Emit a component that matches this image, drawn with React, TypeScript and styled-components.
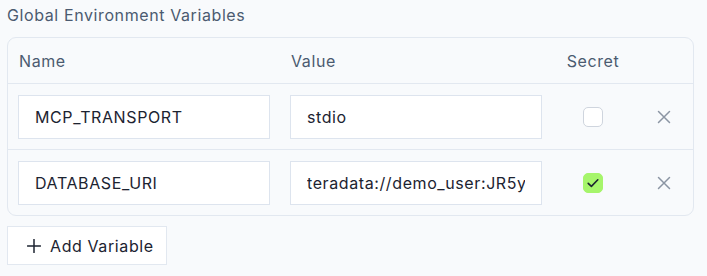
import styled, { createGlobalStyle } from 'styled-components';

const GlobalStyle = createGlobalStyle`
  html, body {
    margin: 0;
    padding: 0;
    background: #f8fafc;
  }
  body {
    font-family: Inter, "Noto Sans", sans-serif;
    letter-spacing: 0.6px;
  }
`;

type Variable = { name: string; value: string; secret: boolean };

const variables: Variable[] = [
  { name: 'MCP_TRANSPORT', value: 'stdio', secret: false },
  { name: 'DATABASE_URI', value: 'teradata://demo_user:JR5yPx9@host:1025/db', secret: true },
];

function CloseIcon() {
  return (
    <svg width="14" height="14" viewBox="0 0 14 14" fill="none">
      <path d="M1.5 1.5L12.5 12.5M12.5 1.5L1.5 12.5" stroke="#8b95a3" strokeWidth="1.5" strokeLinecap="round" />
    </svg>
  );
}

function CheckIcon() {
  return (
    <svg width="14" height="14" viewBox="0 0 14 14" fill="none">
      <path d="M2.2 7.4L5.4 10.4L11.8 3.8" stroke="#1c2331" strokeWidth="1.6" strokeLinecap="round" strokeLinejoin="round" />
    </svg>
  );
}

function PlusIcon() {
  return (
    <svg width="14" height="14" viewBox="0 0 14 14" fill="none">
      <path d="M7 0.5V13.5M0.5 7H13.5" stroke="#1c2331" strokeWidth="1.5" strokeLinecap="round" />
    </svg>
  );
}

function App(): JSX.Element {
  return (
    <Page>
      <GlobalStyle />
      <Title>Global Environment Variables</Title>
      <Card>
        <HeaderRow>
          <HeadCell>Name</HeadCell>
          <HeadCell>Value</HeadCell>
          <HeadCell $center>Secret</HeadCell>
          <span />
        </HeaderRow>
        {variables.map((v, i) => (
          <Row key={v.name} $last={i === variables.length - 1}>
            <Field defaultValue={v.name} />
            <Field defaultValue={v.value} />
            <CheckCell>
              <Checkbox $checked={v.secret}>{v.secret && <CheckIcon />}</Checkbox>
            </CheckCell>
            <RemoveButton aria-label="Remove">
              <CloseIcon />
            </RemoveButton>
          </Row>
        ))}
      </Card>
      <AddButton>
        <PlusIcon />
        <span>Add Variable</span>
      </AddButton>
    </Page>
  );
}

export default App;

const Page = styled.div`
  width: 707px;
  height: 276px;
  box-sizing: border-box;
  padding: 4px 13px 0 7px;
  display: flex;
  flex-direction: column;
  align-items: flex-start;
`;

const Title = styled.div`
  font-size: 16px;
  line-height: 22px;
  color: #4b5b70;
  margin-bottom: 11px;
`;

const Card = styled.div`
  width: 100%;
  box-sizing: border-box;
  border: 1px solid #e2e8f0;
  border-radius: 9px;
  background: #f8fafc;
`;

const Grid = styled.div`
  display: grid;
  grid-template-columns: 252px 252px 62px 39px;
  column-gap: 20px;
  align-items: center;
  padding: 0 10px;
`;

const HeaderRow = styled(Grid)`
  height: 45px;
  border-bottom: 1px solid #e2e8f0;
`;

const HeadCell = styled.div<{ $center?: boolean }>`
  font-size: 16px;
  color: #4b5b70;
  padding-left: ${({ $center }) => ($center ? '0' : '1px')};
  text-align: ${({ $center }) => ($center ? 'center' : 'left')};
`;

const Row = styled(Grid)<{ $last: boolean }>`
  height: 65px;
  border-bottom: ${({ $last }) => ($last ? 'none' : '1px solid #e2e8f0')};
`;

const Field = styled.input`
  box-sizing: border-box;
  width: 100%;
  height: 44px;
  padding: 0 16px;
  border: 1px solid #dde4ee;
  border-radius: 0;
  background: #ffffff;
  font-family: Inter, "Noto Sans", sans-serif;
  font-size: 16px;
  letter-spacing: 0.6px;
  color: #1c2331;
  outline: none;
`;

const CheckCell = styled.div`
  display: flex;
  justify-content: center;
`;

const Checkbox = styled.div<{ $checked: boolean }>`
  width: 20px;
  height: 20px;
  box-sizing: border-box;
  border-radius: 5px;
  border: 1px solid ${({ $checked }) => ($checked ? '#a6f56b' : '#cfd5de')};
  background: ${({ $checked }) => ($checked ? '#a6f56b' : '#ffffff')};
  display: flex;
  align-items: center;
  justify-content: center;
`;

const RemoveButton = styled.button`
  border: none;
  background: transparent;
  padding: 0;
  display: flex;
  align-items: center;
  justify-content: center;
  cursor: pointer;
`;

const AddButton = styled.button`
  margin-top: 10px;
  height: 39px;
  width: 160px;
  box-sizing: border-box;
  display: flex;
  align-items: center;
  gap: 9px;
  padding: 0 0 0 19px;
  white-space: nowrap;
  border: 1px solid #e2e8f0;
  border-radius: 0;
  background: #ffffff;
  font-family: Inter, "Noto Sans", sans-serif;
  font-size: 16px;
  letter-spacing: 0.6px;
  color: #1c2331;
  cursor: pointer;
`;
